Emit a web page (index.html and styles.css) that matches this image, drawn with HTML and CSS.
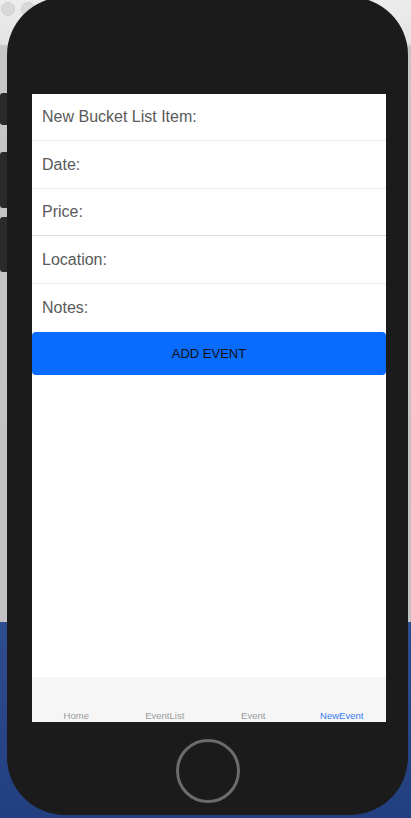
FILE: index.html
```html
<!DOCTYPE html>
<html>
<head>
<meta charset="utf-8">
<link rel="stylesheet" href="styles.css">
</head>
<body>
<div class="desk">
  <span class="win-dot dot1"></span>
  <span class="win-dot dot2"></span>
  <div class="phone">
    <span class="side-btn btn-a"></span>
    <span class="side-btn btn-b"></span>
    <span class="side-btn btn-c"></span>
    <div class="screen">
      <div class="row sep">New Bucket List Item:</div>
      <div class="row sep r48">Date:</div>
      <div class="row sep dark">Price:</div>
      <div class="row sep r48">Location:</div>
      <div class="row r48">Notes:</div>
      <div class="add-btn">ADD EVENT</div>
      <div class="spacer"></div>
      <div class="tabbar">
        <div class="tab">Home</div>
        <div class="tab">EventList</div>
        <div class="tab">Event</div>
        <div class="tab active">NewEvent</div>
      </div>
    </div>
    <div class="home-wrap"><div class="home-btn"></div></div>
  </div>
</div>
</body>
</html>
```
FILE: styles.css
```css
html, body {
  margin: 0;
  padding: 0;
  width: 411px;
  height: 818px;
  overflow: hidden;
}
body {
  font-family: "Liberation Sans", "Noto Sans", Arial, sans-serif;
  background: linear-gradient(to bottom, #ececec 0, #e4e4e4 44px, #c6c6c6 46px, #c2c2c2 622px, #2e4c90 622px, #22407f 818px);
}
.desk {
  position: relative;
  width: 411px;
  height: 818px;
}
.win-dot {
  position: absolute;
  top: 0;
  width: 12px;
  height: 12px;
  border-radius: 50%;
  background: #d9d9d9;
  border: 1px solid #cfcfcf;
}
.dot1 { left: 1px; top: 2px; }
.dot2 { left: 21px; top: 2px; }
.phone {
  position: relative;
  margin-left: 7px;
  top: -3px;
  width: 401px;
  height: 818px;
  background: #1b1b1b;
  border-radius: 58px;
  padding: 97px 0 0 25px;
  box-sizing: border-box;
  display: flex;
  flex-direction: column;
}
.side-btn {
  position: absolute;
  left: -7px;
  width: 7px;
  background: #2a2a2a;
  border-radius: 3px 0 0 3px;
}
.btn-a { top: 96px; height: 32px; }
.btn-b { top: 155px; height: 56px; }
.btn-c { top: 220px; height: 55px; }
.screen {
  width: 354px;
  height: 628px;
  background: #ffffff;
  display: flex;
  flex-direction: column;
}
.row {
  height: 47px;
  box-sizing: border-box;
  display: flex;
  align-items: center;
  padding-left: 10px;
  font-size: 16px;
  color: #5a5a5a;
  flex-shrink: 0;
}
.r48 { height: 48px; }
.sep { border-bottom: 1px solid #ebebeb; }
.dark { border-bottom-color: #d9d9d9; }
.add-btn {
  height: 43px;
  flex-shrink: 0;
  background: #0a6cff;
  border-radius: 4px;
  display: flex;
  align-items: center;
  justify-content: center;
  font-size: 13px;
  color: #111111;
}
.spacer { flex: 1; }
.tabbar {
  height: 45px;
  background: #f6f6f6;
  display: grid;
  grid-template-columns: repeat(4, 1fr);
  align-items: end;
  padding-bottom: 0;
  box-sizing: border-box;
}
.tab {
  text-align: center;
  font-size: 9.5px;
  color: #9a9a9a;
  line-height: 12px;
}
.tab.active { color: #3b7bf6; }
.home-wrap {
  width: 354px;
  display: flex;
  justify-content: center;
  padding-top: 17px;
}
.home-btn {
  width: 58px;
  height: 58px;
  border: 3px solid #6b6b6b;
  border-radius: 50%;
  margin-left: -3px;
}
```
